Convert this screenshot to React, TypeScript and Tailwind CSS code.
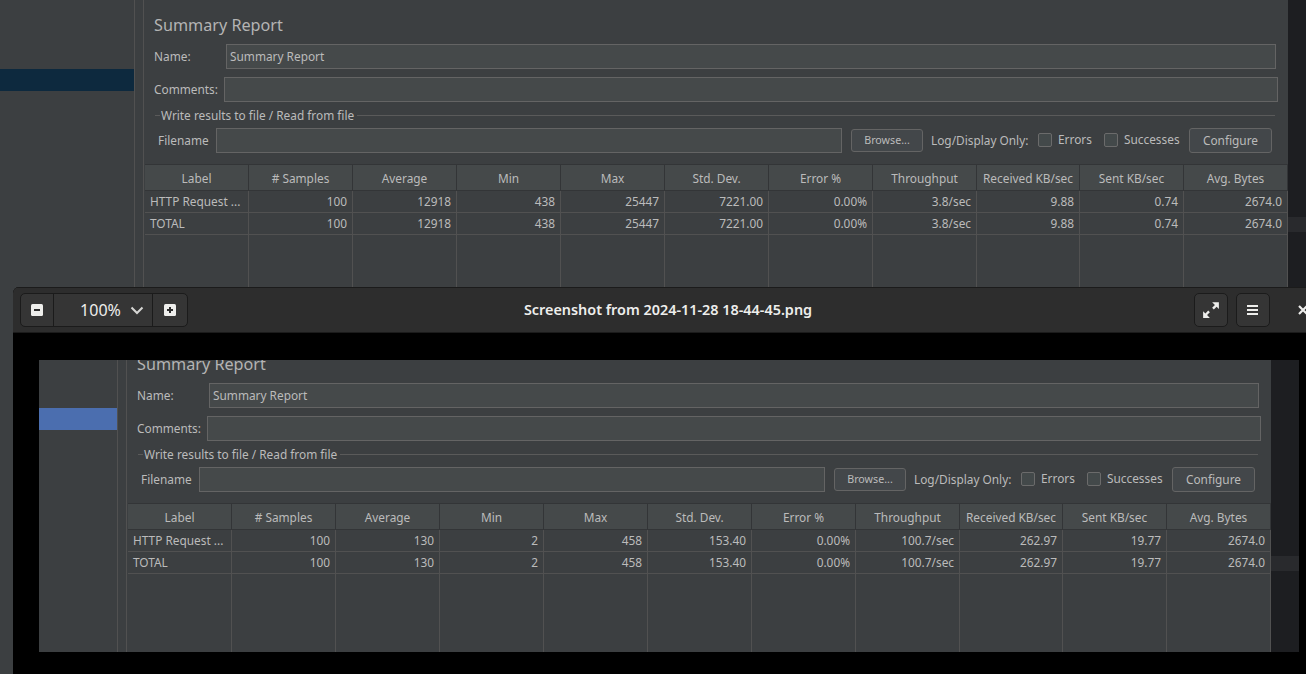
import React from 'react';

const columns = ['Label', '# Samples', 'Average', 'Min', 'Max', 'Std. Dev.', 'Error %', 'Throughput', 'Received KB/sec', 'Sent KB/sec', 'Avg. Bytes'];
const widths = [104, 104, 104, 104, 104, 104, 104, 104, 103, 104, 104];

const topRow = ['100', '12918', '438', '25447', '7221.00', '0.00%', '3.8/sec', '9.88', '0.74', '2674.0'];
const innerRow = ['100', '130', '2', '458', '153.40', '0.00%', '100.7/sec', '262.97', '19.77', '2674.0'];

function Field({ className, value }: { className: string; value?: string }) {
  return (
    <div className={`h-[25px] border border-[#646464] bg-[#45494a] pl-[3px] text-[11.85px] leading-[23px] text-[#bbbbbb] ${className}`}>
      {value}
    </div>
  );
}

function Check({ label, className }: { label: string; className: string }) {
  return (
    <div className={`flex items-center ${className}`}>
      <span className="h-[14px] w-[14px] rounded-[2px] border border-[#6b6b6b] bg-[#43494a]" />
      <span className="ml-[6px] pb-[2px]">{label}</span>
    </div>
  );
}

function DataRow({ cells }: { cells: string[] }) {
  return (
    <div className="ml-[1px] flex h-[22px] border-b border-[#515151] leading-[21px]">
      {cells.map((cell, i) => (
        <div
          key={i}
          style={{ width: widths[i] }}
          className={`border-r border-[#515151] ${i === 0 ? 'pl-[5px] text-left' : 'pr-[5px] text-right'}`}
        >
          {cell}
        </div>
      ))}
    </div>
  );
}

function JMeterPanel({ sidebar, selection, row, cropTop }: { sidebar: string; selection: string; row: string[]; cropTop: string }) {
  return (
    <div className={`flex h-[313px] text-[#bbbbbb] ${cropTop}`}>
      <div className={`${sidebar} shrink-0 bg-[#3c3f41] pt-[69px]`}>
        <div className={`h-[22px] ${selection}`} />
      </div>
      <div className="w-[9px] shrink-0 border-l border-[#515151] bg-[#3c3f41]" />
      <div className="w-[1145px] shrink-0 border-l border-[#515151] bg-[#3c3f41] text-[11.85px]">
        <div className="ml-[10px] pt-[13px] text-[16.2px] leading-[24px] text-[#b4b4b4]">Summary Report</div>
        <div className="mt-[7px] flex items-center">
          <span className="ml-[10px] w-[72px]">Name:</span>
          <Field className="w-[1050px]" value="Summary Report" />
        </div>
        <div className="mt-[8px] flex items-center">
          <span className="ml-[10px] w-[70px]">Comments:</span>
          <Field className="w-[1054px]" />
        </div>
        <div className="mt-[5px] flex h-[17px] items-center pl-[11px]">
          <span className="w-[5px] border-t border-[#5a5a5a]" />
          <span className="px-[1px]">Write results to file / Read from file</span>
          <span className="ml-[2px] w-[918px] border-t border-[#5a5a5a]" />
        </div>
        <div className="mt-[4px] flex h-[25px] items-center">
          <span className="ml-[14px] w-[58px]">Filename</span>
          <Field className="w-[626px]" />
          <button className="ml-[9px] h-[23px] w-[72px] rounded-[3px] border border-[#646464] bg-[#43474a] text-[10.7px] text-[#bbbbbb]">
            Browse...
          </button>
          <span className="ml-[8px] w-[107px] whitespace-nowrap">Log/Display Only:</span>
          <Check label="Errors" className="w-[66px]" />
          <Check label="Successes" className="w-[85px]" />
          <button className="h-[25px] w-[83px] rounded-[3px] border border-[#646464] bg-[#43474a] text-[11.85px] text-[#bbbbbb]">
            Configure
          </button>
        </div>
        <div className="ml-[1px] mt-[11px] flex h-[27px] border-y border-[#333537] bg-[#45494a]">
          {columns.map((name, i) => (
            <div
              key={name}
              style={{ width: widths[i] }}
              className="border-r border-[#333537] text-center leading-[26px] whitespace-nowrap"
            >
              {name}
            </div>
          ))}
        </div>
        <DataRow cells={['HTTP Request ...', ...row]} />
        <DataRow cells={['TOTAL', ...row]} />
        <div className="ml-[1px] flex h-[79px]">
          {widths.map((w, i) => (
            <div key={i} style={{ width: w }} className="border-r border-[#515151]" />
          ))}
        </div>
      </div>
      <div className="w-[28px] shrink-0 bg-[#1d1e21] pt-[217px]">
        <div className="h-[15px] bg-[#292a2d]" />
      </div>
    </div>
  );
}

function IconSquare({ plus }: { plus?: boolean }) {
  return (
    <svg width="12" height="12" viewBox="0 0 12 12">
      <rect width="12" height="12" rx="1.5" fill="#eeeeec" />
      <rect x="3" y="5" width="6" height="2" fill="#2d2d2d" />
      {plus && <rect x="5" y="3" width="2" height="6" fill="#2d2d2d" />}
    </svg>
  );
}

function HeaderButton({ children }: { children: React.ReactNode }) {
  return (
    <div className="flex h-[34px] w-[34px] items-center justify-center rounded-[5px] border border-[#1b1b1b] bg-[#353535]">
      {children}
    </div>
  );
}

function ViewerWindow() {
  return (
    <div className="absolute left-[13px] top-[287px] h-[387px] w-[1310px] overflow-hidden rounded-t-[6px] bg-black">
      <div className="grid h-[46px] grid-cols-[1fr_auto_1fr] items-center border-y border-[#1b1b1b] bg-[#2d2d2d] px-[7px]">
        <div className="flex h-[34px] w-[168px] rounded-[5px] border border-[#1b1b1b] bg-[#353535]">
          <div className="flex w-[33px] items-center justify-center border-r border-[#1b1b1b]">
            <IconSquare />
          </div>
          <div className="flex flex-1 items-center justify-center gap-[9px] border-r border-[#1b1b1b] pl-[18px] text-[16px] text-[#eeeeec]">
            100%
            <svg width="14" height="9" viewBox="0 0 14 9" fill="none" stroke="#d6d6d4" strokeWidth="2">
              <path d="M1.5 1.5 7 7l5.5-5.5" />
            </svg>
          </div>
          <div className="flex w-[34px] items-center justify-center">
            <IconSquare plus />
          </div>
        </div>
        <div className="text-[14.4px] font-semibold whitespace-nowrap text-[#eeeeec]">
          Screenshot from 2024-11-28 18-44-45.png
        </div>
        <div className="flex items-center justify-end">
          <div className="flex gap-[8px]">
            <HeaderButton>
              <svg width="18" height="18" viewBox="0 0 16 16" fill="#eeeeec">
                <path d="M9 1h6v6l-2-2-2.500 2.500-1.500-1.500L11.500 3.500z" />
                <path d="M1 15V9l2 2 2.500-2.500 1.500 1.500L4.500 12.500 7 15z" />
              </svg>
            </HeaderButton>
            <HeaderButton>
              <svg width="12" height="12" viewBox="0 0 12 12" fill="#eeeeec">
                <rect y="1" width="11" height="2" />
                <rect y="5" width="11" height="2" />
                <rect y="9" width="11" height="2" />
              </svg>
            </HeaderButton>
          </div>
          <svg className="ml-[27px] mr-[7px]" width="12" height="12" viewBox="0 0 12 12" stroke="#eeeeec" strokeWidth="2.2">
            <path d="M2 2l8 8M10 2l-8 8" />
          </svg>
        </div>
      </div>
      <div className="ml-[26px] mt-[27px] h-[292px] w-[1260px] overflow-hidden">
        <JMeterPanel sidebar="w-[78px]" selection="bg-[#4b6eaf]" row={innerRow} cropTop="-mt-[21px]" />
      </div>
    </div>
  );
}

export default function App() {
  return (
    <div className="relative h-[674px] w-[1306px] overflow-hidden bg-[#3c3f41] font-['Noto_Sans',sans-serif]">
      <div className="h-[2px] border-b border-[#4a4c4e] bg-[#3a3d3f]" />
      <JMeterPanel sidebar="w-[134px]" selection="bg-[#0d293e]" row={topRow} cropTop="-mt-[2px]" />
      <ViewerWindow />
    </div>
  );
}
